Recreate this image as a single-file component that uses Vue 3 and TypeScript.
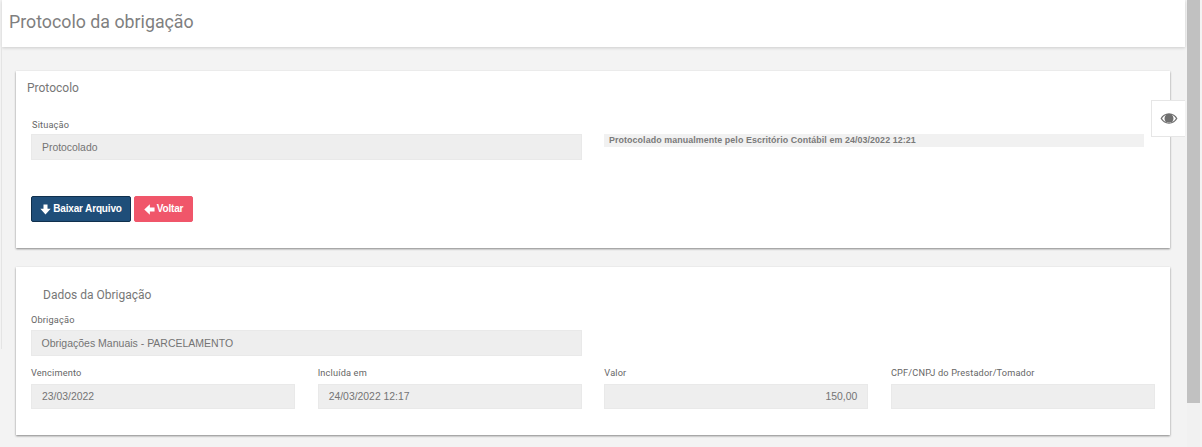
<script setup lang="ts">
interface Field { label: string; value: string; right?: boolean }
const dates: Field[] = [
  { label: 'Vencimento', value: '23/03/2022' },
  { label: 'Incluída em', value: '24/03/2022 12:17' },
  { label: 'Valor', value: '150,00', right: true },
  { label: 'CPF/CNPJ do Prestador/Tomador', value: '' },
]
</script>

<template>
  <div class="page">
    <main class="main">
      <header class="top"><h1>Protocolo da obrigação</h1></header>
      <div class="content">
        <section class="card card-one">
          <h2 class="card-title">Protocolo</h2>
          <div class="row-half">
            <div class="field">
              <label>Situação</label>
              <div class="input">Protocolado</div>
            </div>
            <div class="note-wrap">
              <div class="note">Protocolado manualmente pelo Escritório Contábil em 24/03/2022 12:21</div>
            </div>
          </div>
          <div class="actions">
            <button class="btn btn-blue" type="button">
              <svg viewBox="0 0 12 12" class="ico"><path d="M3.800 .5h4.400v4.700H11.600L6 11.500 .4 5.200h3.400z" fill="#fff" /></svg>
              Baixar Arquivo
            </button>
            <button class="btn btn-red" type="button">
              <svg viewBox="0 0 12 12" class="ico"><path d="M11.500 3.800v4.400H6.400v3.400L.3 6l6.100-5.600v3.400z" fill="#fff" /></svg>
              Voltar
            </button>
          </div>
        </section>

        <section class="card card-two">
          <h2 class="card-title">Dados da Obrigação</h2>
          <div class="row-half">
            <div class="field">
              <label>Obrigação</label>
              <div class="input">Obrigações Manuais - PARCELAMENTO</div>
            </div>
          </div>
          <div class="row-four">
            <div v-for="f in dates" :key="f.label" class="field">
              <label>{{ f.label }}</label>
              <div class="input short" :class="{ right: f.right }">{{ f.value }}</div>
            </div>
          </div>
        </section>
      </div>
      <aside class="eye">
        <svg viewBox="0 0 20 14" width="18" height="13">
          <path d="M10 1.200C5.800 1.200 2.400 3.600.6 7c1.800 3.400 5.200 5.800 9.400 5.800s7.600-2.400 9.400-5.800C17.600 3.600 14.200 1.200 10 1.200zM2.300 7C3.400 5.100 5 3.700 6.900 2.900A5 5 0 0 0 5 7a5 5 0 0 0 10 0 5 5 0 0 0-1.900-4.100C15 3.700 16.600 5.100 17.700 7c-1.700 2.900-4.400 4.600-7.700 4.600S4 9.900 2.300 7z" fill="#6f6f6f" fill-rule="evenodd" />
          <path d="M10 3.200a3.800 3.800 0 1 0 0 7.600 3.800 3.800 0 0 0 0-7.600zM8.300 4.700a1.100 1.100 0 1 1 0 2.200 1.100 1.100 0 0 1 0-2.200z" fill="#6f6f6f" fill-rule="evenodd" />
        </svg>
      </aside>
      <span class="edge"></span>
    </main>
    <div class="scrollbar"><div class="thumb"></div></div>
  </div>
</template>

<style>
html, body { margin: 0; background: #fff; }
</style>

<style scoped>
.page {
  width: 1202px;
  height: 447px;
  overflow: hidden;
  display: flex;
  background: #f3f3f3;
  font-family: "Liberation Sans", Arial, sans-serif;
}
.main {
  position: relative;
  width: 1187px;
  flex: none;
}
.top {
  margin-left: 2px;
  margin-right: 2px;
  height: 47px;
  background: #fff;
  box-shadow: 0 1px 3px rgba(0, 0, 0, 0.16);
  display: flex;
  align-items: center;
}
.top h1 {
  margin: 0 0 3px 7px;
  font: 400 17.8px/22px Roboto, sans-serif;
  color: #7f7f7f;
}
.content {
  padding: 24px 17px 0 16px;
  display: flex;
  flex-direction: column;
  gap: 19px;
}
.card {
  background: #fff;
  box-shadow: 0 1px 2px rgba(0, 0, 0, 0.45);
  padding: 0 15px;
  box-sizing: border-box;
}
.card-one { height: 177px; }
.card-two { height: 168px; }
.card-title {
  margin: 0;
  font: 400 12px/14px Roboto, sans-serif;
  color: #777;
}
.card-one .card-title { padding-top: 10px; margin-left: -4px; }
.card-two .card-title { padding-top: 21px; margin-left: 12px; }
.row-half {
  display: grid;
  grid-template-columns: 551px 540px;
  column-gap: 22px;
}
.card-one .row-half { margin-top: 24px; }
.card-two .row-half { margin-top: 12px; }
.row-four {
  display: grid;
  grid-template-columns: repeat(4, 264px);
  column-gap: 22.67px;
  margin-top: 11px;
  width: 1124px;
}
.field label {
  display: block;
  font: 400 9.2px/11px Roboto, sans-serif;
  color: #666;
  letter-spacing: 0.17px;
  margin-bottom: 4px;
}
.card-one .field label { padding-left: 1px; }
.card-two .row-half label { margin-bottom: 5px; }
.row-four .field label { margin-bottom: 6px; }
.input {
  height: 26px;
  box-sizing: border-box;
  background: #eeeeee;
  border: 1px solid #e9e9e9;
  padding: 0 10px;
  font-size: 10.4px;
  line-height: 25px;
  color: #747474;
}
.card-two .row-half .input { padding-left: 9.500px; font-size: 10.500px; }
.input.short { height: 25px; line-height: 23px; }
.input.right { text-align: right; }
.note-wrap { padding-top: 15px; }
.note {
  height: 13px;
  background: #f1f1f1;
  padding: 0 5px;
  font-size: 8.900px;
  font-weight: 700;
  line-height: 12px;
  color: #7a7a7a;
  letter-spacing: 0.08px;
}
.actions {
  display: flex;
  gap: 3px;
  margin-top: 36px;
}
.btn {
  height: 26px;
  border-radius: 2px;
  box-sizing: border-box;
  font: 700 10px/1 "Liberation Sans", Arial, sans-serif;
  color: #fff;
  display: flex;
  align-items: center;
  justify-content: center;
  gap: 2px;
  padding: 0;
  letter-spacing: -0.15px;
}
.btn-blue { width: 100px; background: #1f4e79; border: 1px solid #10304d; }
.btn-red { width: 59px; background: #f0566a; border: 1px solid #f0566a; }
.ico { width: 11px; height: 11px; flex: none; }
.eye {
  position: absolute;
  left: 1151px;
  top: 100px;
  width: 34px;
  height: 37px;
  box-sizing: border-box;
  background: #fff;
  border: 1px solid #e6e6e6;
  border-right: none;
  display: flex;
  align-items: center;
  justify-content: center;
}
.edge {
  position: absolute;
  left: 1px;
  top: 47px;
  width: 1px;
  height: 302px;
  background: #e4e4e4;
}
.scrollbar {
  width: 13px;
  height: 447px;
  flex: none;
  background: #f1f1f1;
}
.thumb {
  height: 403px;
  background: #c1c1c1;
}
</style>
